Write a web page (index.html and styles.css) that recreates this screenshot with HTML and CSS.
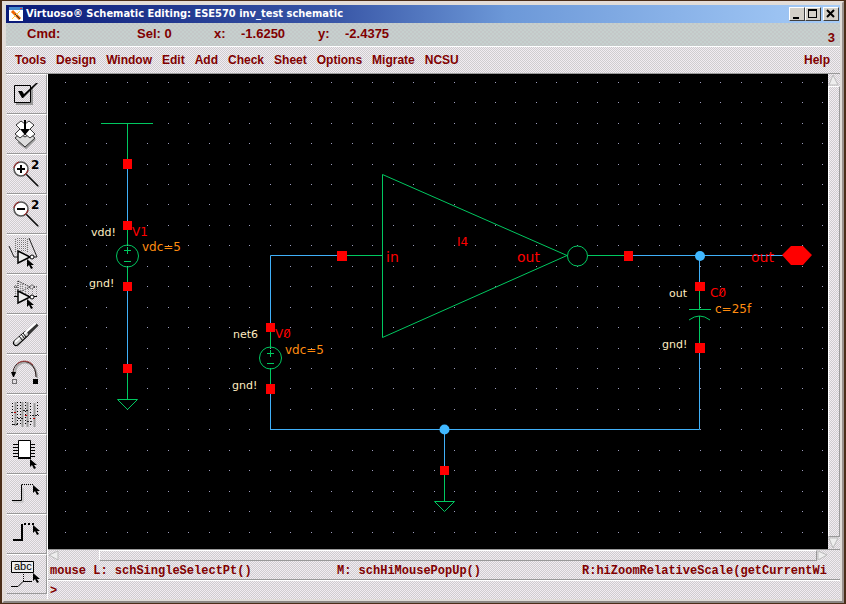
FILE: index.html
```
<!DOCTYPE html>
<html lang="en">
<head>
    <meta charset="UTF-8">
    <meta name="viewport" content="width=device-width, initial-scale=1.0">
    <title>Virtuoso Schematic Editing</title>
    <link rel="stylesheet" href="styles.css">
</head>
<body>
    <!-- shared shapes -->
    <svg class="defs" width="0" height="0" aria-hidden="true">
        <symbol id="cursor" viewBox="0 0 8 12" width="8" height="12">
            <path d="M0 0v8l2-2 2 4 2-1-2-3h3z" fill="#000"/>
        </symbol>
        <symbol id="lens" viewBox="0 0 38 38">
            <path d="M20 21l11 11" stroke="#aaa" stroke-width="2"/>
            <path d="M18 19l12 12" stroke="#111" stroke-width="1.500"/>
            <circle cx="13" cy="14" r="7" fill="#fff" stroke="#555" stroke-width="1.500"/>
            <path d="M6 13a7 7 0 0 1 5-6M20 15a7 7 0 0 1-4 5" fill="none" stroke="#a22"/>
        </symbol>
    </svg>

    <div class="window">
        <header class="titlebar">
            <svg class="app-icon" width="14" height="14" viewBox="0 0 14 14" aria-hidden="true">
                <path fill="#fff" d="M0 0h14v14H0z"/>
                <path fill="#48c" d="M0 0h14v3H0z"/>
                <path fill="#e33" d="M11 1h2v1h-2z"/>
                <path d="M3 4l8 8" stroke="#e60" stroke-width="3"/>
                <path d="M11 4l-8 8" stroke="#fc4"/>
                <path d="M6 7l5 5" stroke="#333"/>
            </svg>
            <h1>Virtuoso® Schematic Editing: ESE570 inv_test schematic</h1>
            <div class="window-buttons">
                <button type="button" aria-label="Minimize"><svg width="14" height="12"><path d="M3 9h6v2H3z"/></svg></button>
                <button type="button" aria-label="Maximize"><svg width="14" height="12"><path fill-rule="evenodd" d="M2 1h9v9H2zM3 3h7v6H3z"/></svg></button>
                <button type="button" class="close" aria-label="Close"><svg width="14" height="12"><path d="M3 2l7 7M10 2l-7 7" stroke="#000" stroke-width="2"/></svg></button>
            </div>
        </header>

        <div class="cmdbar">
            <span class="cmd">Cmd:</span>
            <span class="sel">Sel: 0</span>
            <span class="axis">x:</span>
            <span class="coord">-1.6250</span>
            <span class="axis">y:</span>
            <span class="coord">-2.4375</span>
            <span class="win-number">3</span>
        </div>

        <nav class="menubar">
            <button type="button">Tools</button>
            <button type="button">Design</button>
            <button type="button">Window</button>
            <button type="button">Edit</button>
            <button type="button">Add</button>
            <button type="button">Check</button>
            <button type="button">Sheet</button>
            <button type="button">Options</button>
            <button type="button">Migrate</button>
            <button type="button">NCSU</button>
            <button type="button" class="help">Help</button>
        </nav>

        <div class="workspace">
            <div class="toolbar">
                <button type="button" aria-label="Check and Save">
                    <svg width="38" height="38" viewBox="0 0 38 38">
                        <path d="M8 29h16V12" fill="none" stroke="#999" stroke-width="2"/>
                        <path d="M6.500 10.500h16v17h-16z" fill="none" stroke="#000"/>
                        <path d="M10 16l4 0 2 3L28 8h2L15 23h-1z"/>
                    </svg>
                </button>
                <button type="button" aria-label="Save">
                    <svg width="38" height="38" viewBox="0 0 38 38">
                        <path d="M10 27l8 6 9-9" fill="none" stroke="#999" stroke-width="2"/>
                        <path d="M7 23l5-4 5 3 5-3 5 4-10 9z" fill="#ddd" stroke="#333"/>
                        <path d="M7 19l5-5-4-4 5-4 4 3 4-3 5 4-4 4 5 5-5 4-5-4-5 4z" fill="#fff" stroke="#333"/>
                        <path d="M16 5h2v9h4l-5 6-5-6h4z"/>
                    </svg>
                </button>
                <button type="button" aria-label="Zoom In by 2">
                    <svg width="38" height="38" viewBox="0 0 38 38">
                        <use href="#lens"/>
                        <path d="M9 14h8M13 10v8" stroke="#000" stroke-width="2"/>
                        <text class="icon-num" x="23" y="14">2</text>
                    </svg>
                </button>
                <button type="button" aria-label="Zoom Out by 2">
                    <svg width="38" height="38" viewBox="0 0 38 38">
                        <use href="#lens"/>
                        <path d="M9 14h8" stroke="#000" stroke-width="2"/>
                        <text class="icon-num" x="23" y="14">2</text>
                    </svg>
                </button>
                <button type="button" aria-label="Stretch">
                    <svg width="38" height="38" viewBox="0 0 38 38">
                        <path d="M7.500 4v14M9.500 3v12M11.500 3v12M13.500 3v13M15.500 3v14M17.500 3v14M19.500 4v14" stroke="#777" stroke-dasharray="1 1"/>
                        <path d="M1 11l5 11h4M21 3l8 19h-3" fill="none" stroke="#222"/>
                        <path d="M10 16v12l12-6z" fill="#eee" stroke="#000" stroke-width="1.500"/>
                        <circle cx="24" cy="22" r="2" fill="#fff" stroke="#000"/>
                        <use href="#cursor" x="19" y="24"/>
                    </svg>
                </button>
                <button type="button" aria-label="Copy">
                    <svg width="38" height="38" viewBox="0 0 38 38">
                        <path d="M6 12h4M10 6v12l12-6zM26 12h3" fill="none" stroke="#000" stroke-dasharray="1 1"/>
                        <circle cx="24" cy="12" r="2" fill="none" stroke="#000" stroke-dasharray="1 1"/>
                        <path d="M7.500 10v12M12.500 9v9M14.500 9v9M17.500 12v9M20.500 12v9M24.500 14v6M28.500 12v10" stroke="#888" stroke-dasharray="1 1"/>
                        <path d="M6 21.500h4M26 21.500h3" stroke="#000"/>
                        <path d="M10 16v12l12-6z" fill="#eee" stroke="#000" stroke-width="1.500"/>
                        <circle cx="24" cy="22" r="2" fill="#fff" stroke="#000"/>
                        <use href="#cursor" x="19" y="24"/>
                    </svg>
                </button>
                <button type="button" aria-label="Delete">
                    <svg width="38" height="38" viewBox="0 0 38 38">
                        <path d="M9 31L30 10" stroke="#999" stroke-width="2"/>
                        <path d="M8 28L18 19" stroke="#000" stroke-width="6" stroke-linecap="round"/>
                        <path d="M18 20L29 9" stroke="#333" stroke-width="4"/>
                        <path d="M8 28L18 19" stroke="#ccc" stroke-width="4" stroke-linecap="round"/>
                        <path d="M7 27L28 8" stroke="#fff" stroke-width="2"/>
                        <path d="M11 21l4 5M13 19l4 5M15 18l3 4" stroke="#000"/>
                    </svg>
                </button>
                <button type="button" aria-label="Undo">
                    <svg width="38" height="38" viewBox="0 0 38 38">
                        <path d="M7 19C7 3 29 3 29 23" fill="none" stroke="#aaa" stroke-width="2"/>
                        <path d="M5 18C6 2 28 2 28 22" fill="none" stroke="#211"/>
                        <path d="M9 9c4-4 12-4 16 1" fill="none" stroke="#a44"/>
                        <path d="M3 17h5l-2 5h-1z"/>
                        <path d="M4.500 24.500h4v4h-4z" fill="none" stroke="#000" stroke-dasharray="1 1"/>
                        <path d="M25 24h5v5h-5z"/>
                    </svg>
                </button>
                <button type="button" aria-label="Property">
                    <svg width="38" height="38" viewBox="0 0 38 38">
                        <path d="M7.500 7v24M14.500 7v25M19.500 7v25M26.500 8v24" stroke="#999" stroke-width="2"/>
                        <path d="M4.500 8v24M9.500 7v22M12.500 7v22M17.500 7v24M22.500 8v24M29.500 7v14" stroke="#000" stroke-dasharray="1 2"/>
                        <path d="M3 17.500h5M10 23.500h5M15 15.500h5M19 26.500h5M24 20.500h7M5 29.500h5" stroke="#222" stroke-dasharray="2 1"/>
                        <path d="M6 17h2v1H6zM17 20h2v1h-2zM25 23h2v1h-2z" fill="#b00"/>
                    </svg>
                </button>
                <button type="button" aria-label="Component">
                    <svg width="38" height="38" viewBox="0 0 38 38">
                        <path d="M5 9.500h22M5 12.500h22M5 15.500h22M5 18.500h22M5 21.500h22" stroke="#000"/>
                        <path d="M10.500 5.500h12v17h-12z" fill="#fff" stroke="#000"/>
                        <path d="M10 22h13v2H10z"/>
                        <use href="#cursor" x="22" y="24"/>
                    </svg>
                </button>
                <button type="button" aria-label="Wire (narrow)">
                    <svg width="38" height="38" viewBox="0 0 38 38">
                        <path d="M5 27h10V13" fill="none" stroke="#bbb"/>
                        <path d="M4 25.500h9.500v-16" fill="none" stroke="#000"/>
                        <path d="M14 9.500h11" stroke="#000" stroke-dasharray="1 1"/>
                        <use href="#cursor" x="25" y="10"/>
                    </svg>
                </button>
                <button type="button" aria-label="Wire (wide)">
                    <svg width="38" height="38" viewBox="0 0 38 38">
                        <path d="M5 25h9V9" fill="none" stroke="#000" stroke-width="2"/>
                        <path d="M16 9h10" stroke="#000" stroke-width="2" stroke-dasharray="2 2"/>
                        <use href="#cursor" x="25" y="10"/>
                    </svg>
                </button>
                <button type="button" aria-label="Wire Name">
                    <svg width="38" height="38" viewBox="0 0 38 38">
                        <path d="M3.500 6.500h22v11h-22z" fill="#eee" stroke="#000"/>
                        <text class="icon-abc" x="6" y="15">abc</text>
                        <path d="M15.500 19v7" stroke="#000" stroke-dasharray="1 1"/>
                        <path d="M3 31.500h7l5-5h9" fill="none" stroke="#000"/>
                        <use href="#cursor" x="25" y="18"/>
                    </svg>
                </button>
            </div>

            <main class="editor">
                <div class="view">
                    <svg class="schematic" viewBox="48 74 780 475" preserveAspectRatio="xMinYMin slice" role="img" aria-label="inv_test schematic">
                        <!-- grid -->
                        <path class="grid" d="M65 82.500H828M65 102.500H828M65 123.500H828M65 143.500H828M65 164.500H828M65 184.500H828M65 204.500H828M65 225.500H828M65 245.500H828M65 266.500H828M65 286.500H828M65 307.500H828M65 327.500H828M65 348.500H828M65 368.500H828M65 388.500H828M65 409.500H828M65 429.500H828M65 450.500H828M65 470.500H828M65 491.500H828M65 511.500H828M65 532.500H828"/>

                        <!-- wires -->
                        <g class="wire">
                            <path d="M127.500 164v61M127.500 287v81"/>
                            <path d="M342 255.500H270.500V327M270.500 389v40.500H699.500V348"/>
                            <path d="M628 255.500H783M699.500 256v30M444.500 430v40"/>
                        </g>

                        <!-- devices -->
                        <g class="device">
                            <path d="M101 123.500h52M127.500 124v40M127.500 225v20M127.500 267v20M127.500 368v31"/>
                            <circle cx="127.500" cy="256" r="11"/>
                            <path d="M124 250.500h7M127.500 247v7M124 261.500h7"/>
                            <path d="M117.500 399.500h20l-10 10z"/>
                            <path d="M270.500 327v21M270.500 368v20"/>
                            <circle cx="270.500" cy="358" r="11"/>
                            <path d="M267 353.500h7M270.500 350v7M267 363.500h7"/>
                            <path d="M342 255.500h40M382.500 174.500v163L567 255.500z"/>
                            <circle cx="577.500" cy="256" r="10"/>
                            <path d="M588 255.500h40"/>
                            <path d="M699.500 287v22M689 309.500h22M689 320q10.500-8 21 0M699.500 316v32"/>
                            <path d="M444.500 470v31M434.500 501.500h20l-10 10z"/>
                        </g>

                        <!-- pins -->
                        <path class="pin" d="M123 159h9v10h-9zM123 221h9v9h-9zM123 282h9v9h-9zM123 364h9v9h-9zM266 323h9v9h-9zM266 384h9v10h-9zM337 251h10v10h-10zM624 251h9v10h-9zM695 282h10v9h-10zM695 343h10v10h-10zM440 466h9v9h-9zM782 255l9-9h12l9 9-9 10h-12z"/>
                        <circle class="node" cx="700" cy="256" r="5"/>
                        <circle class="node" cx="444.500" cy="429.500" r="5"/>

                        <g class="net">
                            <text x="91" y="236">vdd!</text>
                            <text x="89" y="287">gnd!</text>
                            <text x="233" y="338">net6</text>
                            <text x="232" y="389">gnd!</text>
                            <text x="669" y="297">out</text>
                            <text x="662" y="348">gnd!</text>
                        </g>
                        <g class="name">
                            <text x="132" y="236">V1</text>
                            <text x="275" y="338">V0</text>
                            <text x="457" y="246">I4</text>
                            <text x="710" y="297">C0</text>
                        </g>
                        <!-- slash through the zeros -->
                        <path class="slash" d="M284 337l6-8M719 296l6-8"/>
                        <g class="terminal">
                            <text x="386" y="262">in</text>
                            <text x="517" y="262">out</text>
                            <text x="751" y="262">out</text>
                        </g>
                        <g class="param">
                            <text x="142" y="251">vdc=5</text>
                            <text x="285" y="354">vdc=5</text>
                            <text x="715" y="313">c=25f</text>
                        </g>
                    </svg>
                    <div class="vscroll">
                        <svg width="11" height="12"><path d="M5 1L1 11h9z" fill="#eee" stroke="#bbb"/></svg>
                        <div class="thumb"></div>
                        <svg width="11" height="12"><path d="M1 1h9L5 11z" fill="#eee" stroke="#bbb"/></svg>
                    </div>
                </div>
                <div class="hscroll">
                    <svg width="11" height="11"><path d="M10 1L1 5l9 5z" fill="#eee" stroke="#bbb"/></svg>
                    <div class="thumb"></div>
                    <svg width="11" height="11"><path d="M1 1l9 4-9 5z" fill="#eee" stroke="#bbb"/></svg>
                </div>
                <div class="mouse-line">
                    <span>mouse L: schSingleSelectPt()</span>
                    <span>M: schHiMousePopUp()</span>
                    <span>R:hiZoomRelativeScale(getCurrentWi</span>
                </div>
                <div class="prompt">
                    <label for="ciw">&gt;</label>
                    <input type="text" id="ciw">
                </div>
            </main>
        </div>
    </div>
</body>
</html>
```
FILE: styles.css
```
* {
    box-sizing: border-box;
}
body {
    margin: 0;
    height: 100vh;
    padding: 1px 2px 1px 2px;
    display: flex;
    background-color: #4a2d18;
    font-family: "Liberation Sans", Arial, sans-serif;
    font-size: 12px;
    font-weight: bold;
    color: #800000;
}
button {
    margin: 0;
    padding: 0;
    border: none;
    background: none;
    font: inherit;
    color: inherit;
}
svg {
    display: block;
}
.defs {
    position: absolute;
}
.window {
    flex: 1;
    min-width: 0;
    display: flex;
    flex-direction: column;
    padding: 2px;
    border: 2px solid #e4dcd8;
    border-right-color: #9a928e;
    border-bottom-color: #8a8684;
    background-color: #e0dcd8;
}

/* title */
.titlebar {
    display: flex;
    align-items: center;
    height: 18px;
    flex: none;
    padding: 0 1px 0 3px;
    background: linear-gradient(to right, #0a1a78, #3a58a8 40%, #6c98d8 60%, #a6ccf8);
    color: #fff;
}
.titlebar h1 {
    flex: 1;
    margin: 0 0 0 3px;
    font-family: "DejaVu Sans Condensed", "DejaVu Sans", sans-serif;
    font-size: 11px;
    line-height: 18px;
    white-space: nowrap;
}
.window-buttons {
    display: flex;
}
.window-buttons button {
    width: 16px;
    height: 14px;
    border: 1px solid;
    border-color: #fff #404040 #404040 #fff;
    background-color: #d4d0c8;
}
.window-buttons .close {
    margin-left: 2px;
}

/* command line */
.cmdbar {
    display: flex;
    align-items: center;
    height: 23px;
    flex: none;
    padding: 0 5px 2px 21px;
    background: repeating-conic-gradient(#c4c8c8 0 25%, #c6d0ce 0 50%) 0 0 / 4px 4px;
    font-size: 13px;
}
.cmd {
    width: 110px;
}
.sel {
    width: 77px;
}
.axis {
    width: 27px;
}
.coord {
    width: 77px;
}
.win-number {
    margin-left: auto;
    align-self: flex-end;
    line-height: 13px;
}

/* menus */
.menubar {
    display: flex;
    gap: 10px;
    height: 28px;
    flex: none;
    padding: 0 10px 0 9px;
    border-top: 1px solid #fff;
    border-bottom: 1px solid #999;
    background: repeating-conic-gradient(#cfcdcf 0 25%, #f2ecf2 0 50%) 0 0 / 2px 2px;
}
.menubar .help {
    margin-left: auto;
}

/* workspace */
.workspace {
    flex: 1;
    min-height: 0;
    display: flex;
    background: repeating-conic-gradient(#cfcdcf 0 25%, #f2ecf2 0 50%) 0 0 / 2px 2px;
}
.toolbar {
    width: 42px;
    flex: none;
    padding-left: 1px;
    border-right: 1px solid #fff;
}
.toolbar button {
    display: block;
    width: 40px;
    height: 40px;
    padding-left: 1px;
    border-top: 1px solid #fff;
    border-right: 1px solid #999;
    border-bottom: 1px solid #999;
}
.icon-num {
    font-family: "DejaVu Sans", sans-serif;
    font-size: 12px;
    font-weight: bold;
}
.icon-abc {
    font-size: 11px;
    font-weight: normal;
}
.editor {
    flex: 1;
    min-width: 0;
    display: flex;
    flex-direction: column;
}
.view {
    flex: 1;
    min-height: 0;
    display: flex;
}
.schematic {
    flex: 1;
    min-width: 0;
    height: 100%;
    background-color: #000;
    font-family: "DejaVu Sans", sans-serif;
    font-weight: normal;
    font-size: 12px;
}
.grid {
    stroke: #9c9cbc;
    stroke-dasharray: 1 20 1 19 1 20 1 19 1 20 1 19 1 20 1 19 1 19 1 20 1 19 1 20 1 19;
}
.wire {
    fill: none;
    stroke: #40b0f8;
}
.device {
    fill: none;
    stroke: #00c860;
}
.pin {
    fill: #f00;
}
.node {
    fill: #40b8ff;
}
.net {
    fill: #ffecc0;
    font-size: 11px;
}
.name {
    fill: #f00;
}
.slash {
    stroke: #f00;
}
.terminal {
    fill: #f00;
    font-size: 14px;
}
.param {
    fill: #ff8c10;
}

/* scroll bars */
.vscroll {
    width: 12px;
    flex: none;
    display: flex;
    flex-direction: column;
}
.hscroll {
    height: 12px;
    flex: none;
    display: flex;
    padding-right: 12px;
    border-top: 1px solid #999;
}
.thumb {
    flex: 1;
    border: 1px solid;
    border-color: #fff #999 #999 #fff;
}
.hscroll .thumb {
    margin-left: 40px;
}

/* bottom lines */
.mouse-line {
    display: grid;
    grid-template-columns: 287fr 245fr 258fr;
    height: 19px;
    flex: none;
    padding-left: 2px;
    border-bottom: 1px solid #999;
    font-family: "Liberation Mono", monospace;
    line-height: 20px;
    white-space: nowrap;
}
.mouse-line span {
    min-width: 0;
}
.prompt {
    display: flex;
    align-items: center;
    height: 19px;
    flex: none;
    padding: 2px 0 0 2px;
    border-top: 1px solid #fff;
    font-family: "Liberation Mono", monospace;
}
.prompt input {
    flex: 1;
    min-width: 0;
    padding: 0 4px;
    border: none;
    outline: none;
    background: none;
    font: inherit;
    color: inherit;
}
```
